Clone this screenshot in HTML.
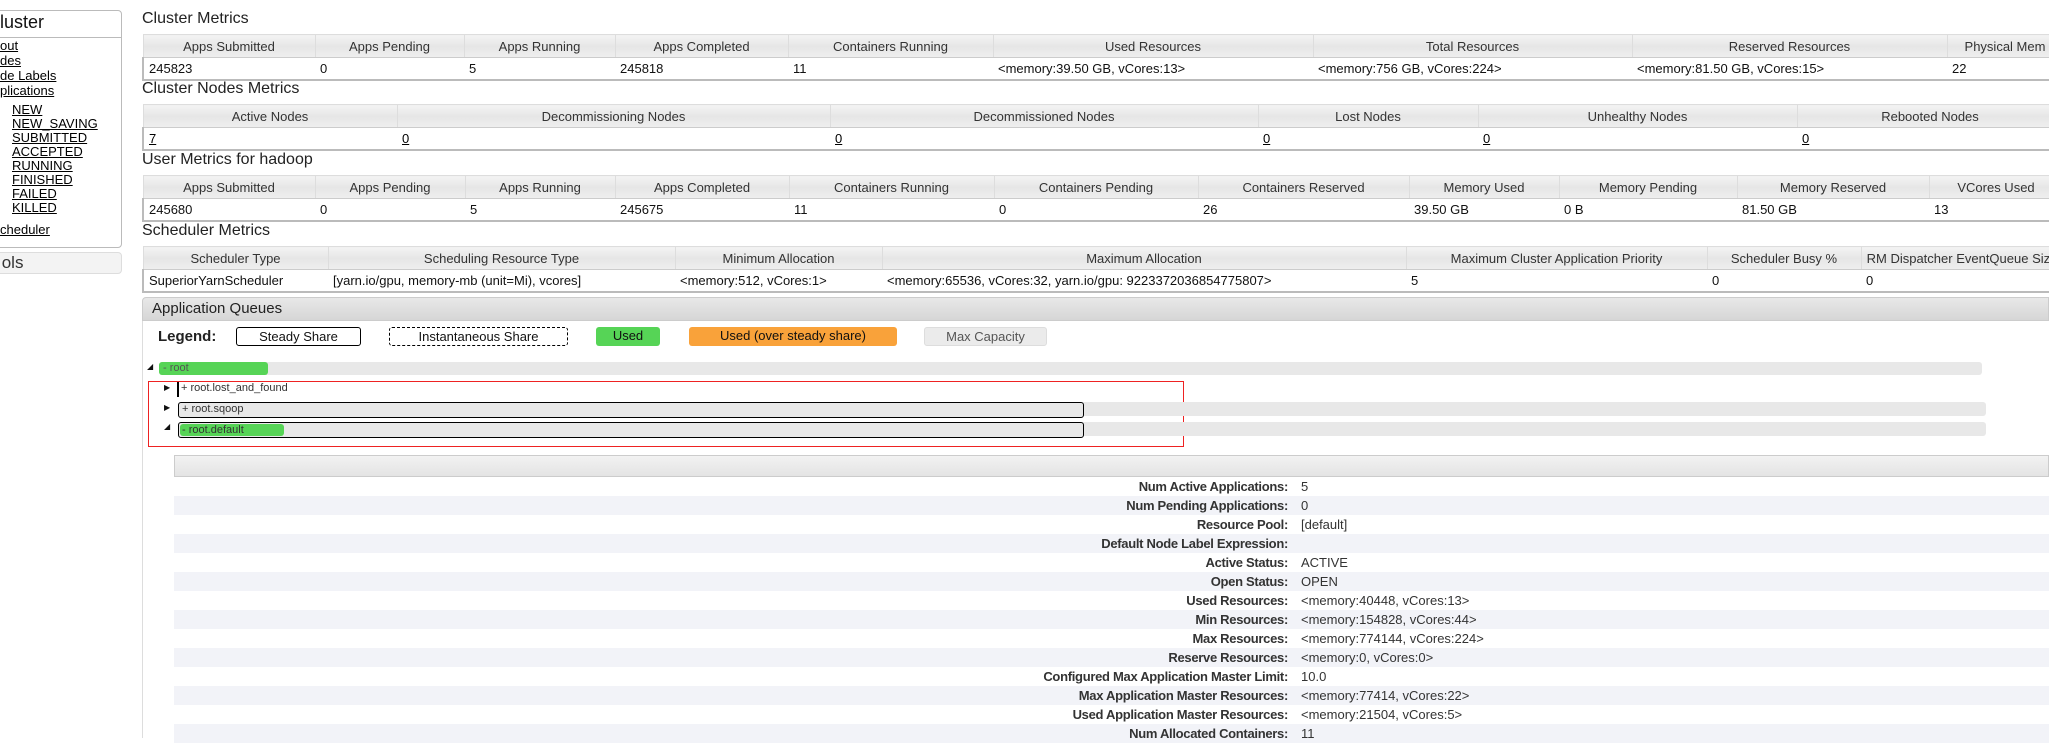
<!DOCTYPE html>
<html><head><meta charset="utf-8"><style>
*{box-sizing:border-box;margin:0;padding:0}
body{width:2049px;height:738px;overflow:hidden;background:#fff;font-family:"Liberation Sans",sans-serif;font-size:13px;color:#111;position:relative}
.a{position:absolute;white-space:nowrap}
a{color:#000}
.side{position:absolute;left:-4px;top:10px;width:126px;height:238px;border:1px solid #bbb;border-radius:4px}
.title{position:absolute;left:142px;font-size:16px;color:#222}
table{position:absolute;left:142px;border-collapse:collapse;table-layout:fixed}
th{font-weight:normal;background:linear-gradient(#f3f3f3,#e6e6e6 50%,#efefef);height:23px;border:1px solid #ddd;border-bottom:1px solid #ccc;color:#333;white-space:nowrap;overflow:hidden}
td{height:22px;border-bottom:2px solid #bbb;padding-left:5px;white-space:nowrap;overflow:hidden}
tr td:first-child{border-left:2px solid #bbb}
.bar{position:absolute;height:13px;background:#e8e8e8;border-radius:3px}
.g{background:#56d456}
.lg{position:absolute;top:327px;height:19px;text-align:center;line-height:17px;font-size:13px;border-radius:3px}
.row{position:absolute;left:174px;width:1875px;height:19px;line-height:19px;font-size:13px}
.row b{position:absolute;right:761px;font-weight:bold;color:#333;letter-spacing:-0.3px}
.row span{position:absolute;left:1127px;color:#333}
</style></head><body>
<div class="side"></div>
<div class="a" style="left:0;top:12px;font-size:18px">luster</div>
<div style="position:absolute;left:0;top:37px;width:122px;border-top:1px solid #bbb"></div>
<div class="a" style="left:0;top:38px;line-height:15px"><a href="#">out</a><br><a href="#">des</a><br><a href="#">de Labels</a><br><a href="#">plications</a></div>
<div class="a" style="left:12px;top:103px;line-height:14px"><a href="#">NEW</a><br><a href="#">NEW_SAVING</a><br><a href="#">SUBMITTED</a><br><a href="#">ACCEPTED</a><br><a href="#">RUNNING</a><br><a href="#">FINISHED</a><br><a href="#">FAILED</a><br><a href="#">KILLED</a></div>
<div class="a" style="left:0;top:222px"><a href="#">cheduler</a></div>
<div class="a" style="left:-4px;top:252px;width:126px;height:22px;border:1px solid #ddd;border-radius:4px;background:#f3f3f3;font-size:17px;line-height:20px;color:#333">&nbsp;ols</div>

<div class="title" style="top:10px">Cluster Metrics</div>
<table style="top:34px;width:1920px"><colgroup><col width="172"><col width="149"><col width="151"><col width="173"><col width="205"><col width="320"><col width="319"><col width="315"><col width="116"></colgroup>
<tr><th>Apps Submitted</th><th>Apps Pending</th><th>Apps Running</th><th>Apps Completed</th><th>Containers Running</th><th>Used Resources</th><th>Total Resources</th><th>Reserved Resources</th><th>Physical Mem</th></tr>
<tr><td>245823</td><td>0</td><td>5</td><td>245818</td><td>11</td><td>&lt;memory:39.50 GB, vCores:13&gt;</td><td>&lt;memory:756 GB, vCores:224&gt;</td><td>&lt;memory:81.50 GB, vCores:15&gt;</td><td>22</td></tr></table>

<div class="title" style="top:80px">Cluster Nodes Metrics</div>
<table style="top:104px;width:1920px"><colgroup><col width="254"><col width="433"><col width="428"><col width="220"><col width="319"><col width="266"></colgroup>
<tr><th>Active Nodes</th><th>Decommissioning Nodes</th><th>Decommissioned Nodes</th><th>Lost Nodes</th><th>Unhealthy Nodes</th><th>Rebooted Nodes</th></tr>
<tr><td><a href="#">7</a></td><td><a href="#">0</a></td><td><a href="#">0</a></td><td><a href="#">0</a></td><td><a href="#">0</a></td><td><a href="#">0</a></td></tr></table>

<div class="title" style="top:151px">User Metrics for hadoop</div>
<table style="top:175px;width:1920px"><colgroup><col width="172"><col width="150"><col width="150"><col width="174"><col width="205"><col width="204"><col width="211"><col width="150"><col width="178"><col width="192"><col width="134"></colgroup>
<tr><th>Apps Submitted</th><th>Apps Pending</th><th>Apps Running</th><th>Apps Completed</th><th>Containers Running</th><th>Containers Pending</th><th>Containers Reserved</th><th>Memory Used</th><th>Memory Pending</th><th>Memory Reserved</th><th>VCores Used</th></tr>
<tr><td>245680</td><td>0</td><td>5</td><td>245675</td><td>11</td><td>0</td><td>26</td><td>39.50 GB</td><td>0 B</td><td>81.50 GB</td><td>13</td></tr></table>

<div class="title" style="top:222px">Scheduler Metrics</div>
<table style="top:246px;width:1920px"><colgroup><col width="185"><col width="347"><col width="207"><col width="524"><col width="301"><col width="154"><col width="202"></colgroup>
<tr><th>Scheduler Type</th><th>Scheduling Resource Type</th><th>Minimum Allocation</th><th>Maximum Allocation</th><th>Maximum Cluster Application Priority</th><th>Scheduler Busy %</th><th>RM Dispatcher EventQueue Size</th></tr>
<tr><td>SuperiorYarnScheduler</td><td>[yarn.io/gpu, memory-mb (unit=Mi), vcores]</td><td>&lt;memory:512, vCores:1&gt;</td><td>&lt;memory:65536, vCores:32, yarn.io/gpu: 9223372036854775807&gt;</td><td>5</td><td>0</td><td>0</td></tr></table>

<div class="a" style="left:142px;top:297px;width:1907px;height:24px;border:1px solid #ccc;border-radius:4px 0 0 0;background:linear-gradient(#e8e8e8,#d6d6d6);font-size:15px;line-height:22px;padding-left:9px;color:#222">Application Queues</div>
<div style="position:absolute;left:142px;top:321px;width:1px;height:417px;background:#ddd"></div>
<div class="a" style="left:158px;top:327px;font-size:15px;line-height:19px;font-weight:bold;color:#222">Legend:</div>
<div class="lg" style="left:236px;width:125px;border:1px solid #000">Steady Share</div>
<div class="lg" style="left:389px;width:179px;border:1px dashed #000">Instantaneous Share</div>
<div class="lg g" style="left:596px;width:64px">Used</div>
<div class="lg" style="left:689px;width:208px;background:#f9a23a">Used (over steady share)</div>
<div class="lg" style="left:924px;width:123px;background:#ebebeb;border:1px solid #ddd;color:#555">Max Capacity</div>

<div class="a" style="left:147px;top:362px;font-size:8px">◢</div>
<div class="bar" style="left:159px;top:362px;width:1823px"></div>
<div class="bar g" style="left:159px;top:362px;width:109px;font-size:11px;line-height:13px;color:#555;padding-left:4px">- root</div>

<div style="position:absolute;left:148px;top:381px;width:1036px;height:66px;border:1px solid #e22"></div>
<div class="a" style="left:164px;top:383px;font-size:8px">▶</div>
<div style="position:absolute;left:177px;top:382px;width:2px;height:15px;background:#000"></div>
<div class="a" style="left:181px;top:382px;font-size:11px;color:#333">+ root.lost_and_found</div>
<div class="a" style="left:164px;top:403px;font-size:8px">▶</div>
<div class="bar" style="left:178px;top:402px;width:1808px;height:14px"></div>
<div class="bar" style="left:178px;top:402px;width:906px;height:16px;border:1.5px solid #000;font-size:11px;line-height:13px;color:#333;padding-left:3px">+ root.sqoop</div>
<div class="a" style="left:164px;top:422px;font-size:8px">◢</div>
<div class="bar" style="left:178px;top:422px;width:1808px;height:14px"></div>
<div class="bar" style="left:178px;top:422px;width:906px;height:16px;border:1.5px solid #000"></div>
<div class="bar g" style="left:180px;top:424px;width:104px;height:12px;font-size:11px;line-height:12px;color:#333;padding-left:2px">- root.default</div>

<div style="position:absolute;left:174px;top:455px;width:1875px;height:22px;background:linear-gradient(#f2f2f2,#e4e4e4);border:1px solid #ccc"></div>
<div class="row" style="top:477px"><b>Num Active Applications:</b><span>5</span></div>
<div class="row" style="top:496px;background:#f2f3f8"><b>Num Pending Applications:</b><span>0</span></div>
<div class="row" style="top:515px"><b>Resource Pool:</b><span>[default]</span></div>
<div class="row" style="top:534px;background:#f2f3f8"><b>Default Node Label Expression:</b><span></span></div>
<div class="row" style="top:553px"><b>Active Status:</b><span>ACTIVE</span></div>
<div class="row" style="top:572px;background:#f2f3f8"><b>Open Status:</b><span>OPEN</span></div>
<div class="row" style="top:591px"><b>Used Resources:</b><span>&lt;memory:40448, vCores:13&gt;</span></div>
<div class="row" style="top:610px;background:#f2f3f8"><b>Min Resources:</b><span>&lt;memory:154828, vCores:44&gt;</span></div>
<div class="row" style="top:629px"><b>Max Resources:</b><span>&lt;memory:774144, vCores:224&gt;</span></div>
<div class="row" style="top:648px;background:#f2f3f8"><b>Reserve Resources:</b><span>&lt;memory:0, vCores:0&gt;</span></div>
<div class="row" style="top:667px"><b>Configured Max Application Master Limit:</b><span>10.0</span></div>
<div class="row" style="top:686px;background:#f2f3f8"><b>Max Application Master Resources:</b><span>&lt;memory:77414, vCores:22&gt;</span></div>
<div class="row" style="top:705px"><b>Used Application Master Resources:</b><span>&lt;memory:21504, vCores:5&gt;</span></div>
<div class="row" style="top:724px;background:#f2f3f8"><b>Num Allocated Containers:</b><span>11</span></div>
</body></html>
